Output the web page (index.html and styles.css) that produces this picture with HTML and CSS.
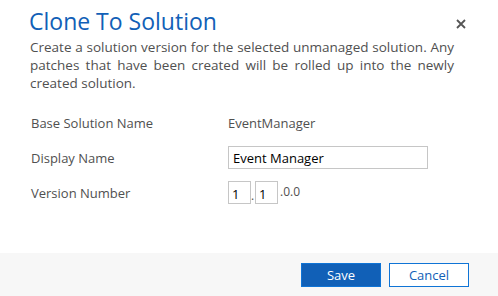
FILE: index.html
```html
<!DOCTYPE html>
<html lang="en">
<head>
<meta charset="UTF-8">
<title>Clone To Solution</title>
<link rel="stylesheet" href="styles.css">
</head>
<body>

<div class="dialog">
  <div class="dialog-body">
    <div class="header">
      <h1 class="title">Clone To Solution</h1>
      <svg class="close" width="10" height="10" viewBox="0 0 10 10">
        <path d="M1 1 L9 9 M9 1 L1 9" stroke="#555555" stroke-width="1.8" fill="none"/>
      </svg>
    </div>
    <p class="desc">Create a solution version for the selected unmanaged solution. Any patches that have been created will be rolled up into the newly created solution.</p>

    <div class="form">
      <div class="form-row">
        <div class="label">Base Solution Name</div>
        <div class="value">EventManager</div>
      </div>
      <div class="form-row">
        <div class="label">Display Name</div>
        <input class="text-input" type="text" value="Event Manager">
      </div>
      <div class="form-row">
        <div class="label">Version Number</div>
        <div class="version">
          <input class="ver-input" type="text" value="1">
          <span class="dot">.</span>
          <input class="ver-input" type="text" value="1">
          <span class="ver-rest">.0.0</span>
        </div>
      </div>
    </div>
  </div>

  <div class="footer">
    <button class="btn btn-primary">Save</button>
    <button class="btn btn-default">Cancel</button>
  </div>
</div>

</body>
</html>
```

FILE: styles.css
```css
body {
  margin: 0;
  padding: 0;
  font-family: 'Open Sans', sans-serif;
  background-color: #ffffff;
}

.dialog {
  width: 498px;
  height: 296px;
  display: flex;
  flex-direction: column;
}

.dialog-body {
  flex: 1;
  padding: 0 44px 0 30px;
}

.header {
  display: flex;
  justify-content: space-between;
  align-items: flex-start;
  margin-right: -14px;
}

.title {
  margin: 6px 0 0 -1px;
  font-size: 23px;
  font-weight: normal;
  color: #1160b7;
  line-height: 30px;
}

.close {
  margin: 19px 2px 0 0;
}

.desc {
  margin: 2px 0 0 0;
  font-size: 13.5px;
  line-height: 18px;
  color: #505050;
  text-align: justify;
}

.form {
  margin-top: 19px;
  display: flex;
  flex-direction: column;
}

.form-row {
  display: flex;
  align-items: center;
  height: 23px;
  margin-bottom: 12px;
}

.label {
  width: 197px;
  padding-left: 1px;
  font-size: 13px;
  color: #505050;
}

.value {
  font-size: 13px;
  color: #505050;
}

.text-input {
  width: 200px;
  height: 23px;
  box-sizing: border-box;
  border: 1px solid #c6c6c6;
  padding: 0 4px;
  font-family: 'Open Sans', sans-serif;
  font-size: 13px;
  color: #000000;
  outline: none;
}

.version {
  display: flex;
  align-items: flex-end;
}

.ver-input {
  width: 23px;
  height: 23px;
  box-sizing: border-box;
  border: 1px solid #c6c6c6;
  padding: 3px 0 0 3px;
  font-family: 'Open Sans', sans-serif;
  font-size: 13px;
  color: #000000;
  outline: none;
}

.dot {
  width: 4px;
  font-size: 12px;
  color: #505050;
}

.ver-rest {
  font-size: 12px;
  color: #505050;
  margin: 0 0 4px 2px;
}

.footer {
  height: 43px;
  background-color: #f7f7f7;
  display: flex;
  justify-content: flex-end;
  align-items: flex-start;
  gap: 8px;
  padding: 10px 29px 0 0;
  box-sizing: border-box;
}

.btn {
  width: 80px;
  height: 24px;
  box-sizing: border-box;
  font-family: 'Open Sans', sans-serif;
  font-size: 13px;
  border: 1px solid #1160b7;
  padding: 0;
  cursor: pointer;
}

.btn-primary {
  background-color: #1160b7;
  color: #ffffff;
  border-color: #0f74d6;
}

.btn-default {
  background-color: #ffffff;
  color: #1160b7;
  border-color: #0f74d6;
}
```
